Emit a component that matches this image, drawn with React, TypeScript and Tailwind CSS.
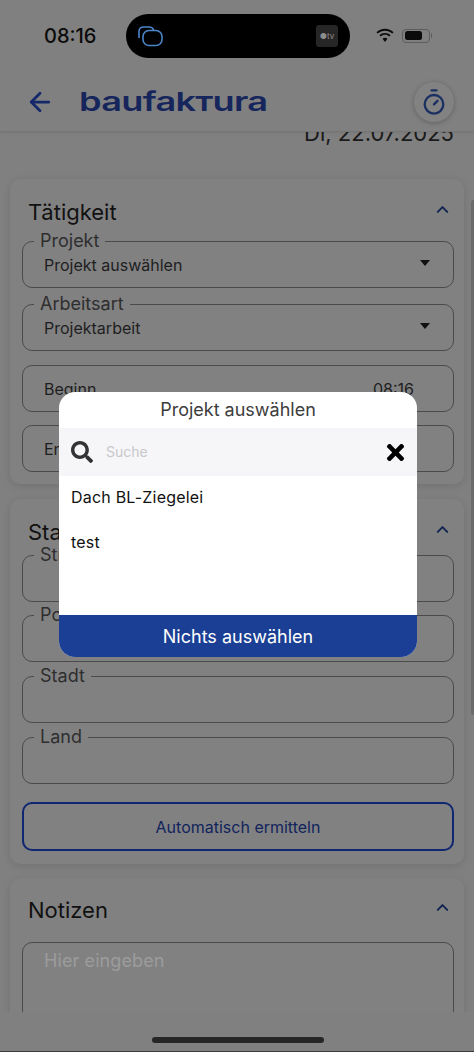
import { ArrowLeft, ChevronUp, Timer } from "lucide-react";
import { FaSearch, FaTimes } from "react-icons/fa";

const Field = ({ label, value, caret }: { label: string; value?: string; caret?: boolean }) => (
  <fieldset className="block h-[58px] rounded-[10px] border border-[#4b4b4b] pl-[21px] pr-[22px]">
    <legend className="ml-[-10px] h-[22px] px-[6px] text-[18px] leading-[22px] text-[#2e2e2e]">{label}</legend>
    <div className="flex h-[26px] items-center justify-between text-[16px] text-[#1e1e1e]">
      <span>{value}</span>
      {caret && <span className="mr-[1px] mb-[4px] h-0 w-0 border-x-[5px] border-t-[6px] border-x-transparent border-t-[#111]" />}
    </div>
  </fieldset>
);

const Row = ({ label, value }: { label: string; value?: string }) => (
  <div className="flex h-[47px] items-center justify-between rounded-[10px] border border-[#4b4b4b] pl-[21px] pr-[39px] text-[16px] text-[#1e1e1e]">
    <span>{label}</span>
    <span>{value}</span>
  </div>
);

const Card = ({ title, children, className }: { title: string; children: React.ReactNode; className: string }) => (
  <section className={`mx-[10px] rounded-[10px] bg-[#818182] pl-[12px] pr-[10px] shadow-[0_2px_8px_rgba(0,0,0,0.12)] ${className}`}>
    <div className="flex items-center justify-between pl-[6px] pr-[2px]">
      <h2 className="text-[22px] font-normal leading-[28px] text-[#111]">{title}</h2>
      <ChevronUp size={19} strokeWidth={2.4} className="mb-[5px] text-[#10224f]" />
    </div>
    {children}
  </section>
);

export default function App() {
  return (
    <div className="relative flex h-[1052px] w-[474px] flex-col overflow-hidden bg-[#808080] font-['Inter',sans-serif]">
      <header className="relative z-10 h-[132px] shrink-0 border-b border-[#767676] bg-[#808080] shadow-[0_1px_2px_rgba(0,0,0,0.08)]">
        <div className="flex h-[70px] items-center pl-[44px] pr-[42px] pt-[1px]">
          <span className="w-[82px] text-[20px] font-medium leading-none text-[#0b0b0b]">08:16</span>
          <div className="flex h-[44px] w-[224px] items-center justify-between rounded-full bg-black pl-[9px] pr-[12px]">
            <svg width="30" height="24" viewBox="0 0 30 24" fill="none" stroke="#4a86c8" strokeWidth="1.6">
              <path d="M4 14V7.5C4 4.5 6 3 8.5 3H14c2.5 0 4 1 4.5 3" />
              <rect x="8" y="6.5" width="19" height="15" rx="6" />
            </svg>
            <span className="flex h-[22px] w-[22px] items-center justify-center rounded-[3px] bg-[#262626] text-[8px] leading-none text-[#8c8c8c]">●tv</span>
          </div>
          <div className="ml-[25px] flex items-center gap-[7px]">
            <svg width="20" height="15" viewBox="0 0 18 14" fill="#0b0b0b">
              <path d="M9 2.5c2.6 0 5 1 6.8 2.7l1.2-1.3C14.9 1.9 12.1.7 9 .7S3.1 1.9 1 3.9l1.2 1.3C4 3.5 6.4 2.5 9 2.5z" />
              <path d="M9 6.4c1.5 0 2.9.6 4 1.6l1.2-1.3C12.8 5.4 11 4.6 9 4.6s-3.8.8-5.2 2.1L5 8c1.1-1 2.5-1.6 4-1.6z" />
              <path d="M9 9.1c-.9 0-1.7.3-2.3.9L9 13l2.3-3c-.6-.6-1.4-.9-2.3-.9z" />
            </svg>
            <div className="flex items-center">
              <div className="h-[14px] w-[28px] rounded-[4px] border border-[#5c5c5c] p-[1.5px]">
                <div className="h-full w-[17px] rounded-[2.5px] bg-[#0b0b0b]" />
              </div>
              <div className="ml-[1px] h-[5px] w-[1px] rounded-r bg-[#5c5c5c]" />
            </div>
          </div>
        </div>
        <div className="mt-[12px] flex h-[40px] items-center justify-between pl-[25px] pr-[20px]">
          <div className="flex items-center">
            <ArrowLeft size={30} strokeWidth={2.2} className="text-[#14286a]" />
            <span className="ml-[24px] origin-left scale-x-[1.39] text-[26px] font-semibold leading-none tracking-[-0.5px] text-[#16265c]">
              baufa<span className="[font-variant-caps:small-caps]">kt</span>ura
            </span>
          </div>
          <button className="flex h-[40px] w-[40px] items-center justify-center rounded-full bg-[#828282] shadow-[0_1px_5px_rgba(0,0,0,0.25)]">
            <Timer size={28} strokeWidth={2} className="text-[#1b3062]" />
          </button>
        </div>
      </header>

      <main className="min-h-0 flex-1 overflow-hidden">
        <div className="-mt-[11px]">
          <p className="h-[24px] pr-[20px] text-right text-[22px] leading-[24px] text-[#1a1a1a]">Di, 22.07.2025</p>
          <Card title="Tätigkeit" className="mt-[34px] pb-[12px] pt-[19px]">
            <div className="mt-[4px]">
              <Field label="Projekt" value="Projekt auswählen" caret />
              <div className="mt-[5px]">
                <Field label="Arbeitsart" value="Projektarbeit" caret />
              </div>
              <div className="mt-[14px]">
                <Row label="Beginn" value="08:16" />
              </div>
              <div className="mt-[13px]">
                <Row label="Ende" />
              </div>
            </div>
          </Card>
          <Card title="Standort" className="mt-[15px] pb-[13px] pt-[19px]">
            <div className="-mt-[2px] flex flex-col">
              <Field label="Straße" />
              <div className="mt-[2px]">
                <Field label="Postleitzahl" />
              </div>
              <div className="mt-[3px]">
                <Field label="Stadt" />
              </div>
              <div className="mt-[3px]">
                <Field label="Land" />
              </div>
            </div>
            <button className="mt-[18px] block h-[49px] w-full rounded-[10px] border-2 border-[#0f2670] text-[16px] text-[#12245c]">Automatisch ermitteln</button>
          </Card>
          <Card title="Notizen" className="mt-[14px] pt-[18px]">
            <div className="mt-[18px] h-[120px] rounded-[10px] border border-[#4b4b4b] px-[21px] pt-[4px] text-[18px] tracking-[0.1px] text-[#9c9c9c]">Hier eingeben</div>
          </Card>
        </div>
      </main>

      <footer className="relative z-10 flex h-[40px] shrink-0 items-end justify-center border-b border-[#3a3a3a] bg-[#808080] pb-[8px] pl-[2px]">
        <div className="h-[6px] w-[172px] rounded-full bg-[#262626]" />
      </footer>

      <div className="absolute right-0 top-[200px] h-[515px] w-[3px] rounded-l bg-[#6b6b6b]" />

      <div className="absolute left-[59px] top-[392px] z-20 flex h-[265px] w-[358px] flex-col overflow-hidden rounded-[16px] bg-white">
        <h3 className="h-[36px] text-center text-[18px] font-normal leading-[36px] text-[#3d3d3d]">Projekt auswählen</h3>
        <div className="flex h-[48px] items-center bg-[#f6f6f8] pl-[12px] pr-[9px]">
          <FaSearch size={22} className="text-[#333]" />
          <span className="ml-[13px] mb-[2px] flex-1 text-[14px] text-[#c8c8cc]">Suche</span>
          <FaTimes size={25} className="text-black" />
        </div>
        <ul className="-mt-[2px] flex-1 pl-[12px] text-[16px] tracking-[0.2px] text-[#111]">
          <li className="flex h-[45px] items-center">Dach BL-Ziegelei</li>
          <li className="flex h-[45px] items-center">test</li>
        </ul>
        <button className="h-[42px] bg-[#1a3f94] text-[18px] text-white">Nichts auswählen</button>
      </div>
    </div>
  );
}
